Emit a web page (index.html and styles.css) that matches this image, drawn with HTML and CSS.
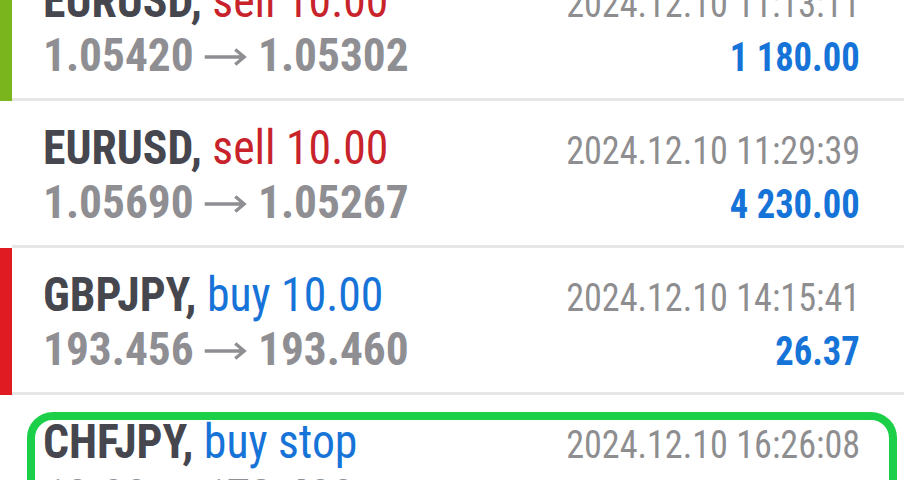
FILE: index.html
```html
<!DOCTYPE html>
<html>
<head>
<meta charset="utf-8">
<link rel="stylesheet" href="styles.css">
</head>
<body>
<div class="list">
  <div class="row bar-green">
    <div class="line">
      <div class="title"><span class="sym">EURUSD,</span> <span class="sell">sell 10.00</span></div>
      <div class="date">2024.12.10 11:13:11</div>
    </div>
    <div class="line">
      <div class="prices">1.05420 <svg class="arrow" viewBox="0 0 44 20" width="44" height="20"><path d="M1 10H41M32 2.5L41 10L32 17.5" fill="none" stroke="currentColor" stroke-width="3.4"/></svg> 1.05302</div>
      <div class="profit">1 180.00</div>
    </div>
  </div>
  <div class="row">
    <div class="line">
      <div class="title"><span class="sym">EURUSD,</span> <span class="sell">sell 10.00</span></div>
      <div class="date">2024.12.10 11:29:39</div>
    </div>
    <div class="line">
      <div class="prices">1.05690 <svg class="arrow" viewBox="0 0 44 20" width="44" height="20"><path d="M1 10H41M32 2.5L41 10L32 17.5" fill="none" stroke="currentColor" stroke-width="3.4"/></svg> 1.05267</div>
      <div class="profit">4 230.00</div>
    </div>
  </div>
  <div class="row bar-red">
    <div class="line">
      <div class="title"><span class="sym">GBPJPY,</span> <span class="buy">buy 10.00</span></div>
      <div class="date">2024.12.10 14:15:41</div>
    </div>
    <div class="line">
      <div class="prices">193.456 <svg class="arrow" viewBox="0 0 44 20" width="44" height="20"><path d="M1 10H41M32 2.5L41 10L32 17.5" fill="none" stroke="currentColor" stroke-width="3.4"/></svg> 193.460</div>
      <div class="profit">26.37</div>
    </div>
  </div>
  <div class="row">
    <div class="line">
      <div class="title"><span class="sym">CHFJPY,</span> <span class="buy">buy stop</span></div>
      <div class="date">2024.12.10 16:26:08</div>
    </div>
    <div class="line">
      <div class="prices">10.00 at 173.400</div>
      <div class="profit"></div>
    </div>
    <div class="frame"></div>
  </div>
</div>
</body>
</html>
```
FILE: styles.css
```css
html, body {
  margin: 0;
  padding: 0;
  background: #ffffff;
  overflow: hidden;
}
body {
  width: 904px;
  height: 480px;
  font-family: Roboto, "Noto Sans", sans-serif;
  font-stretch: 75%;
}
.list {
  margin-top: -46px;
}
.row {
  position: relative;
  height: 123px;
  padding: 21px 44px 0 31px;
  margin-left: 12px;
  border-bottom: 3px solid #e6e6e6;
}
.bar-green {
  box-shadow: -12px 0 0 0 #7ab51d;
}
.bar-red {
  box-shadow: -12px 0 0 0 #e01c22;
}
.line {
  display: flex;
  justify-content: space-between;
  align-items: baseline;
  line-height: 51px;
  white-space: nowrap;
}
.title {
  font-size: 48px;
  transform: scaleX(0.952);
  transform-origin: left center;
}
.sym {
  font-weight: 700;
  color: #46464e;
}
.sell {
  color: #c8222b;
}
.buy {
  color: #1673d8;
}
.date {
  font-size: 38px;
  color: #8e8e90;
  transform: scaleX(0.951);
  transform-origin: right center;
}
.prices {
  font-size: 46px;
  font-weight: 700;
  color: #8e8e93;
  transform: scaleX(0.986);
  transform-origin: left center;
}
.arrow {
  vertical-align: 4px;
}
.profit {
  font-size: 41px;
  font-weight: 700;
  color: #1673d8;
  transform: scaleX(0.892);
  transform-origin: right center;
}
.frame {
  position: absolute;
  top: 17px;
  left: 15px;
  right: 7px;
  height: 200px;
  border: 8px solid #1ccf48;
  border-radius: 26px;
}
```
